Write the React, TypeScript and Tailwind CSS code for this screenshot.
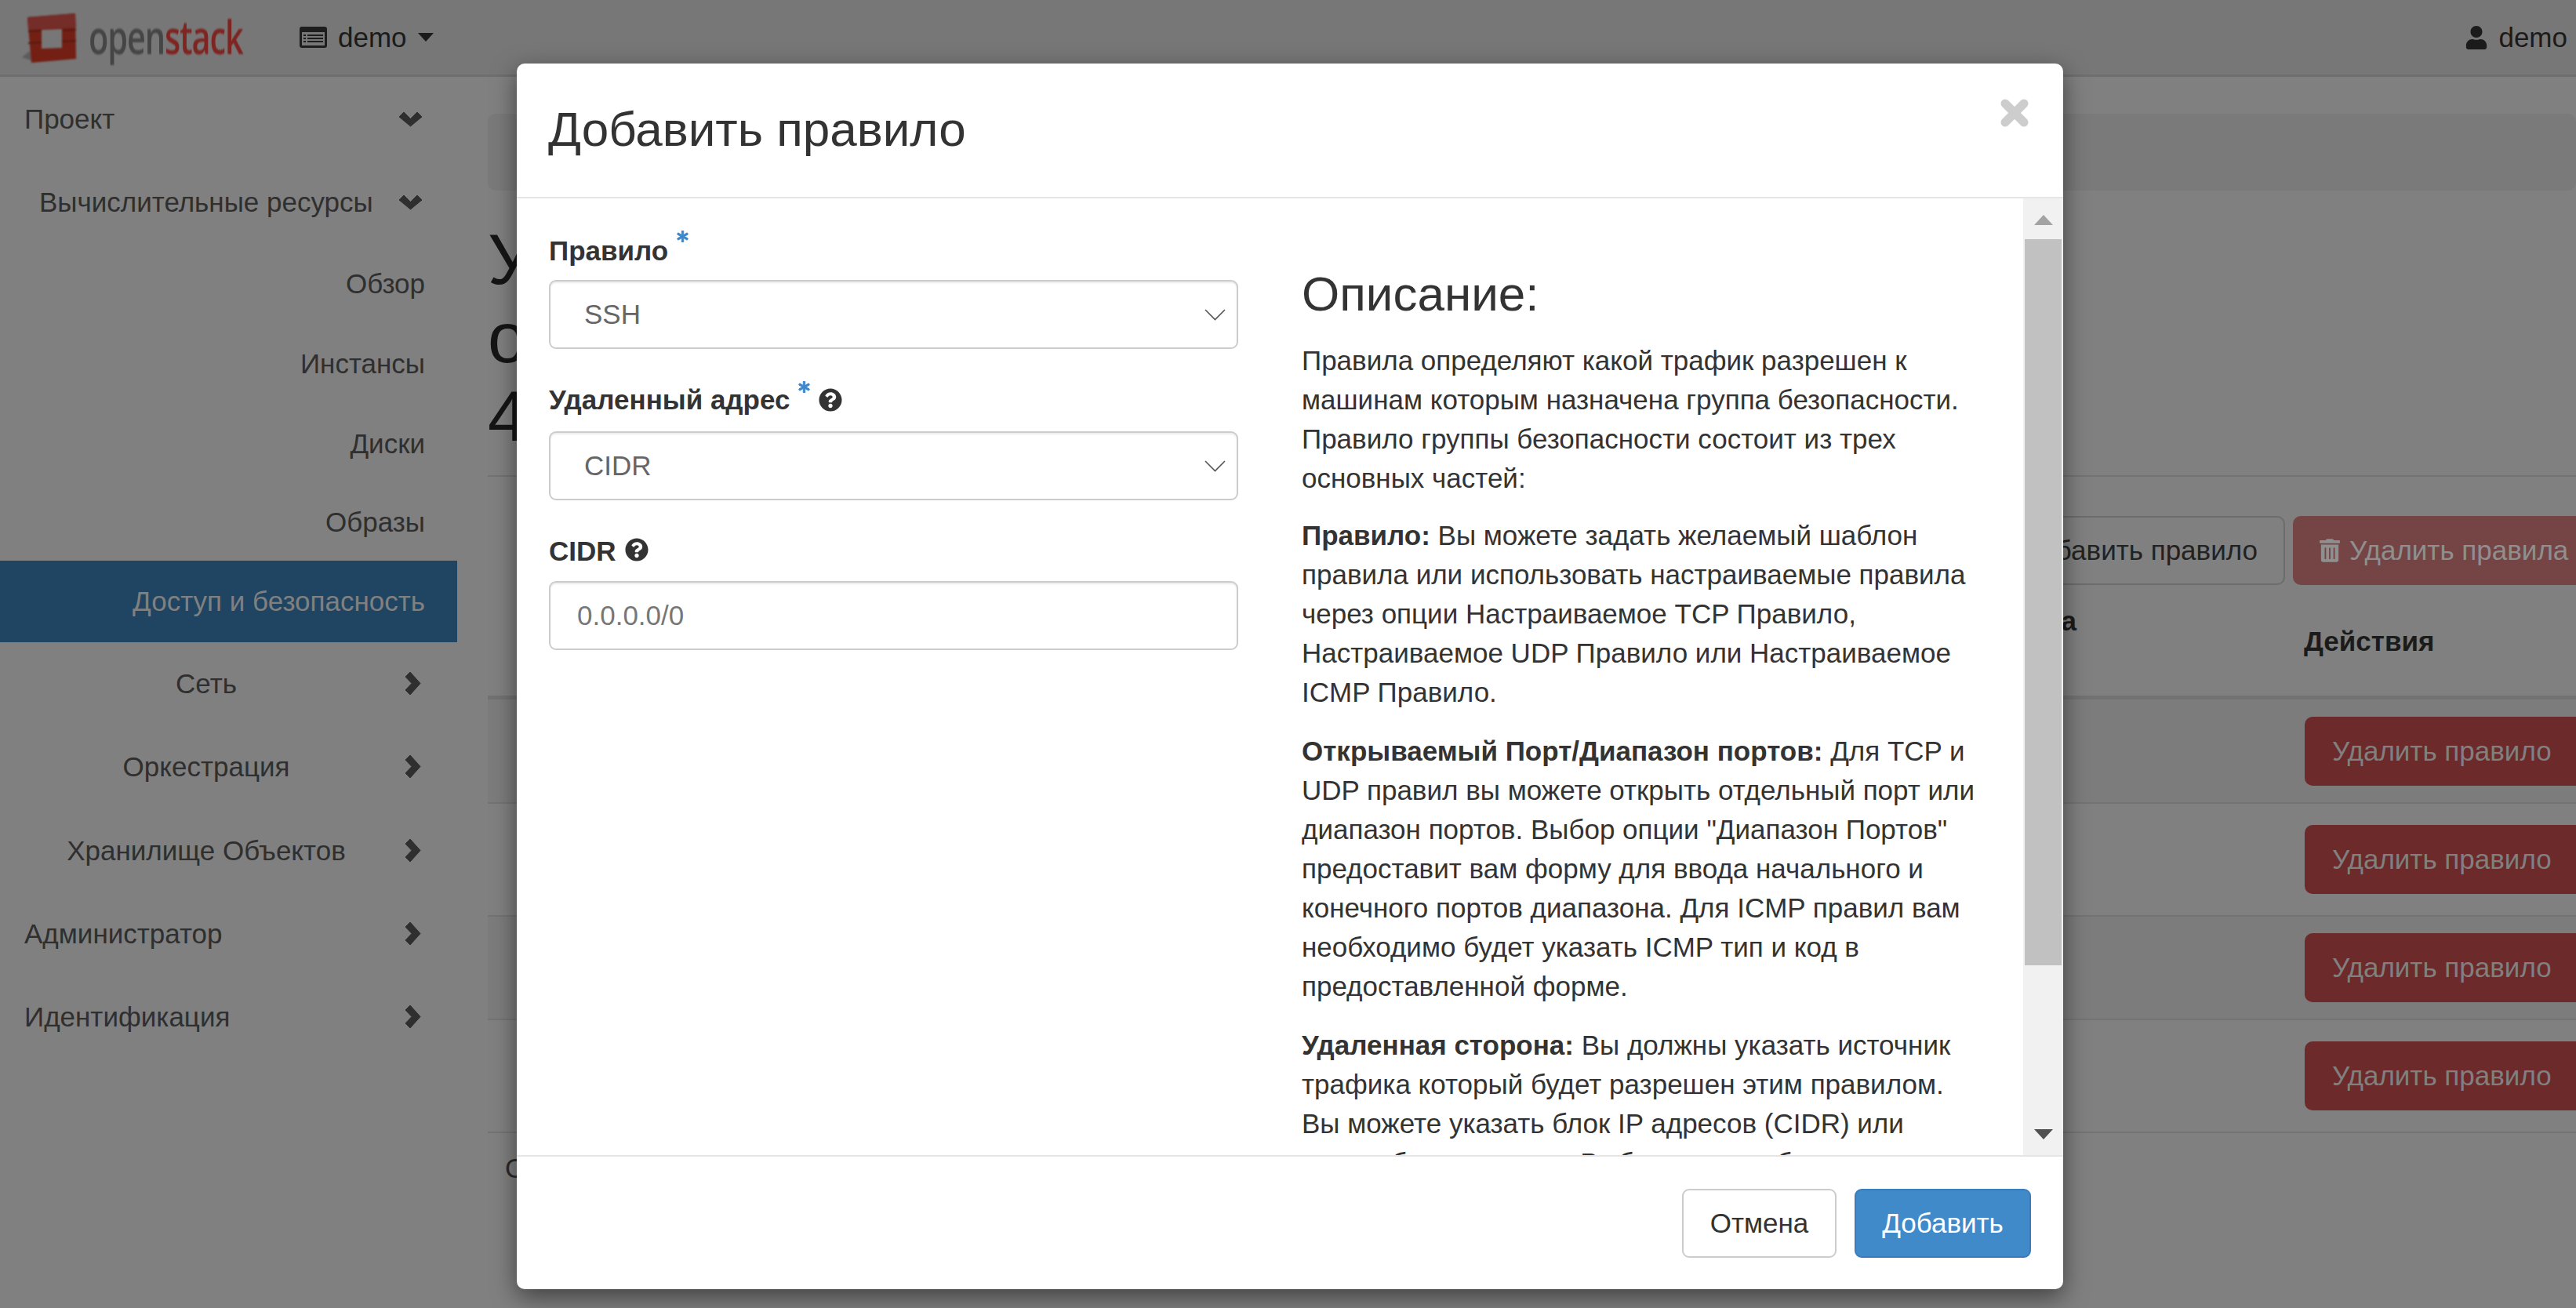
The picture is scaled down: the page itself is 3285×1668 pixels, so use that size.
import { FaAsterisk, FaQuestionCircle, FaTrashAlt, FaUser } from "react-icons/fa";

const NAV = [
  { label: "Проект", h: "h-[107px]", kind: "top", open: true },
  { label: "Вычислительные ресурсы", h: "h-[106px]", kind: "sub", open: true },
  { label: "Обзор", h: "h-[102px]", kind: "leaf" },
  { label: "Инстансы", h: "h-[102px]", kind: "leaf" },
  { label: "Диски", h: "h-[102px]", kind: "leaf" },
  { label: "Образы", h: "h-[98px]", kind: "leaf" },
  { label: "Доступ и безопасность", h: "h-[104px]", kind: "active" },
  { label: "Сеть", h: "h-[105px]", kind: "center" },
  { label: "Оркестрация", h: "h-[107px]", kind: "center" },
  { label: "Хранилище Объектов", h: "h-[107px]", kind: "center" },
  { label: "Администратор", h: "h-[105px]", kind: "top" },
  { label: "Идентификация", h: "h-[107px]", kind: "top" },
];

const ROWS = [
  { h: "h-[133px]", striped: true },
  { h: "h-[144px]", striped: false },
  { h: "h-[132px]", striped: true },
  { h: "h-[144px]", striped: false },
];

function Logo() {
  return (
    <div className="flex items-center">
      <svg width="72" height="66" viewBox="0 0 72 66" className="ml-[28px] shrink-0 blur-[1px]">
        <path d="M0 58 L10 50 L12 62 Z" fill="#5c5c5c" />
        <path d="M7 7 L68 2 L69 60 L12 65 Z M25 23 L25 47 L51 46 L51 22 Z" fill="#741f14" fillRule="evenodd" />
        <path d="M7 7 L68 2 L69 20 L8 23 Z" fill="#752d29" />
        <path d="M8 25 L25 24 M8 40 L25 39 M51 24 L69 23 M51 38 L69 37" stroke="#561910" strokeWidth="2" />
      </svg>
      <span className="ml-[13px] inline-block origin-left -translate-y-[2px] scale-x-[0.69] font-['Open_Sans',sans-serif] text-[60px] leading-none font-semibold tracking-tight blur-[0.8px]">
        <span className="text-[#454545]">open</span>
        <span className="text-[#7e2421]">stack</span>
      </span>
    </div>
  );
}

function Navbar() {
  return (
    <header className="flex h-[98px] items-center justify-between border-b-[3px] border-[#6e6e6e] bg-[#777777]">
      <div className="flex items-center">
        <div className="w-[382px]">
          <Logo />
        </div>
        <svg width="35" height="27" viewBox="0 0 35 27">
          <rect width="35" height="27" rx="3" fill="#1d1d1d" />
          <rect x="3" y="7" width="29" height="17" fill="#777777" />
          <path d="M5 10h3v2H5zM5 14h3v2H5zM5 18h3v2H5zM10 10h20v2H10zM10 14h20v2H10zM10 18h20v2H10z" fill="#1d1d1d" />
        </svg>
        <span className="ml-[14px] text-[#1b1b1b]">demo</span>
        <span className="ml-[14px] h-0 w-0 border-x-[10px] border-t-[11px] border-x-transparent border-t-[#1b1b1b]" />
      </div>
      <div className="flex items-center pr-[11px] text-[#1b1b1b]">
        <FaUser className="mr-[14px] h-[30px] w-[28px]" />
        <span>demo</span>
      </div>
    </header>
  );
}

function ChevronDown() {
  return (
    <svg width="31" height="20" viewBox="0 0 31 20" className="shrink-0 text-[#2f2f2f]">
      <path d="M1 7 L7 1 L15.5 9.5 L24 1 L30 7 L15.5 19 Z" fill="currentColor" stroke="currentColor" strokeLinejoin="round" />
    </svg>
  );
}

function ChevronRight() {
  return (
    <svg width="21" height="31" viewBox="0 0 21 31" className="shrink-0 text-[#2f2f2f]">
      <path d="M7 1 L20 15.5 L7 30 L1 24 L9 15.5 L1 7 Z" fill="currentColor" stroke="currentColor" strokeLinejoin="round" />
    </svg>
  );
}

function Sidebar() {
  return (
    <aside className="w-[583px] shrink-0">
      {NAV.map((item) => (
        <div
          key={item.label}
          className={`${item.h} flex items-center ${item.kind === "active" ? "bg-[#204563] text-[#808080]" : "text-[#2f2f2f]"}`}
        >
          {(item.kind === "leaf" || item.kind === "active") && (
            <span className="w-[542px] text-right">{item.label}</span>
          )}
          {item.kind === "top" && (
            <span className={`${item.open ? "w-[508px]" : "w-[516px]"} pl-[31px]`}>{item.label}</span>
          )}
          {item.kind === "sub" && <span className="w-[508px] pl-[50px]">{item.label}</span>}
          {item.kind === "center" && <span className="-mr-[10px] w-[526px] text-center">{item.label}</span>}
          {item.open && <ChevronDown />}
          {(item.kind === "center" || (item.kind === "top" && !item.open)) && <ChevronRight />}
        </div>
      ))}
    </aside>
  );
}

function PageContent() {
  return (
    <main className="min-w-0 flex-1 pl-[39px]">
      <div className="mt-[47px] h-[98px] rounded-[10px] bg-[#7a7a7a]" />
      <div className="mt-[38px] h-[327px] border-b-2 border-[#737373] text-[90px] leading-[100px] font-normal text-[#151515]">
        <div>У</div>
        <div>о</div>
        <div>4</div>
      </div>
      <div className="mt-[50px] flex h-[88px] justify-end">
        <div className="flex w-[500px] items-center justify-end rounded-[10px] border-2 border-[#6c6c6c] pr-[33px] whitespace-nowrap text-[#222222]">
          Добавить правило
        </div>
        <div className="ml-[10px] flex w-[361px] items-center overflow-hidden rounded-l-[10px] bg-[#754545] pl-[34px] whitespace-nowrap text-[#8f8f8f]">
          <FaTrashAlt className="mr-[12px] h-[32px] w-[26px]" />
          Удалить правила
        </div>
      </div>
      <div className="mt-[2px] flex h-[144px] items-center justify-end border-b-[5px] border-[#727272] font-bold text-[#1b1b1b]">
        <span className="mr-[290px] self-start pt-[19px]">а</span>
        <span className="w-[347px]">Действия</span>
      </div>
      {ROWS.map((row, i) => (
        <div
          key={i}
          className={`${row.h} flex items-center justify-end border-b-2 border-[#737373] ${row.striped ? "bg-[#7c7c7c]" : ""}`}
        >
          <div className="flex h-[88px] w-[346px] items-center overflow-hidden rounded-l-[10px] bg-[#6d2a2a] pl-[35px] whitespace-nowrap text-[#808080]">
            Удалить правило
          </div>
        </div>
      ))}
      <div className="mt-[20px] pl-[22px] text-[#2a2a2a]">Отображено 4 элемента</div>
    </main>
  );
}

function RequiredMark({ className }: { className: string }) {
  return <FaAsterisk strokeWidth={30} className={`ml-[11px] h-[15px] w-[15px] text-[#3d87cb] ${className}`} />;
}

function HelpIcon({ className }: { className: string }) {
  return <FaQuestionCircle className={`h-[30px] w-[30px] text-[#333333] ${className}`} />;
}

function SelectBox({ value }: { value: string }) {
  return (
    <div className="flex h-[88px] items-center justify-between rounded-[9px] border-2 border-[#cccccc] pr-[14px] pl-[43px] text-[#666666] shadow-[inset_0_2px_2px_rgba(0,0,0,0.08)]">
      <span>{value}</span>
      <svg width="27" height="15" viewBox="0 0 27 15" fill="none" stroke="#555555" strokeWidth="1.6">
        <path d="M1 1 L13.5 13.5 L26 1" />
      </svg>
    </div>
  );
}

function RuleForm() {
  return (
    <div className="w-[879px] shrink-0 pt-[19px]">
      <div className="flex h-[85px] items-start pt-[23px]">
        <label className="font-bold text-[#333333]">Правило</label>
        <RequiredMark className="-mt-[1px]" />
      </div>
      <SelectBox value="SSH" />
      <div className="mt-[21px] flex h-[84px] items-start pt-[19px]">
        <label className="font-bold text-[#333333]">Удаленный адрес</label>
        <RequiredMark className="mt-[1px]" />
        <HelpIcon className="mt-[10px] ml-[11px]" />
      </div>
      <SelectBox value="CIDR" />
      <div className="mt-[21px] flex h-[82px] items-start pt-[19px]">
        <label className="font-bold text-[#333333]">CIDR</label>
        <HelpIcon className="mt-[8px] ml-[11px]" />
      </div>
      <input
        readOnly
        placeholder="0.0.0.0/0"
        className="h-[88px] w-full rounded-[9px] border-2 border-[#cccccc] pl-[34px] shadow-[inset_0_2px_2px_rgba(0,0,0,0.08)] outline-none placeholder:text-[#777777]"
      />
    </div>
  );
}

function Description() {
  return (
    <div className="ml-[81px] w-[868px] shrink-0 text-[#333333]">
      <h3 className="mt-[89px] mb-[27px] text-[62px] leading-[66px] font-normal">Описание:</h3>
      <p className="mb-[23px] leading-[50px]">
        Правила определяют какой трафик разрешен к машинам которым назначена группа безопасности. Правило группы
        безопасности состоит из трех основных частей:
      </p>
      <p className="mb-[25px] leading-[50px]">
        <strong>Правило:</strong> Вы можете задать желаемый шаблон правила или использовать настраиваемые правила через
        опции Настраиваемое TCP Правило, Настраиваемое UDP Правило или Настраиваемое ICMP Правило.
      </p>
      <p className="mb-[25px] leading-[50px]">
        <strong>Открываемый Порт/Диапазон портов:</strong> Для TCP и UDP правил вы можете открыть отдельный порт или
        диапазон портов. Выбор опции "Диапазон Портов" предоставит вам форму для ввода начального и конечного портов
        диапазона. Для ICMP правил вам необходимо будет указать ICMP тип и код в предоставленной форме.
      </p>
      <p className="leading-[50px]">
        <strong>Удаленная сторона:</strong> Вы должны указать источник трафика который будет разрешен этим правилом. Вы
        можете указать блок IP адресов (CIDR) или группу безопасности. Выбрав группу безопасности
      </p>
    </div>
  );
}

function Scrollbar() {
  return (
    <div className="flex w-[51px] shrink-0 flex-col items-center bg-[#f1f1f1]">
      <div className="mt-[21px] h-0 w-0 border-x-[12px] border-b-[13px] border-x-transparent border-b-[#a3a3a3]" />
      <div className="mt-[18px] h-[926px] w-[47px] bg-[#c1c1c1]" />
      <div className="mt-[209px] h-0 w-0 border-x-[12px] border-t-[13px] border-x-transparent border-t-[#505050]" />
    </div>
  );
}

function RuleModal() {
  return (
    <div className="absolute top-[81px] left-[659px] flex h-[1563px] w-[1972px] flex-col overflow-hidden rounded-[10px] bg-white shadow-[0_10px_31px_rgba(0,0,0,0.5)]">
      <div className="flex h-[172px] shrink-0 items-start justify-between border-b-2 border-[#e5e5e5] pr-[44px] pl-[40px]">
        <h4 className="mt-[49px] text-[62px] leading-[70px] font-normal text-[#333333]">Добавить правило</h4>
        <svg width="36" height="36" viewBox="0 0 36 36" className="mt-[45px]">
          <path d="M6 6 L30 30 M30 6 L6 30" stroke="#cdcdcd" strokeWidth="11" strokeLinecap="round" />
        </svg>
      </div>
      <div className="flex h-[1220px] shrink-0">
        <div className="flex min-w-0 flex-1 overflow-hidden pl-[41px]">
          <RuleForm />
          <Description />
        </div>
        <Scrollbar />
      </div>
      <div className="flex flex-1 items-start justify-end gap-[23px] border-t-2 border-[#e5e5e5] pt-[41px] pr-[41px]">
        <button className="h-[88px] w-[197px] rounded-[9px] border-2 border-[#cccccc] bg-white text-[#333333]">
          Отмена
        </button>
        <button className="h-[88px] w-[225px] rounded-[9px] border-2 border-[#3a7cbc] bg-[#408aca] text-white">
          Добавить
        </button>
      </div>
    </div>
  );
}

export default function App() {
  return (
    <div className="relative h-[1668px] w-[3285px] overflow-hidden bg-[#808080] font-['Liberation_Sans',Arial,sans-serif] text-[35px] leading-[50px]">
      <Navbar />
      <div className="flex">
        <Sidebar />
        <PageContent />
      </div>
      <RuleModal />
    </div>
  );
}
